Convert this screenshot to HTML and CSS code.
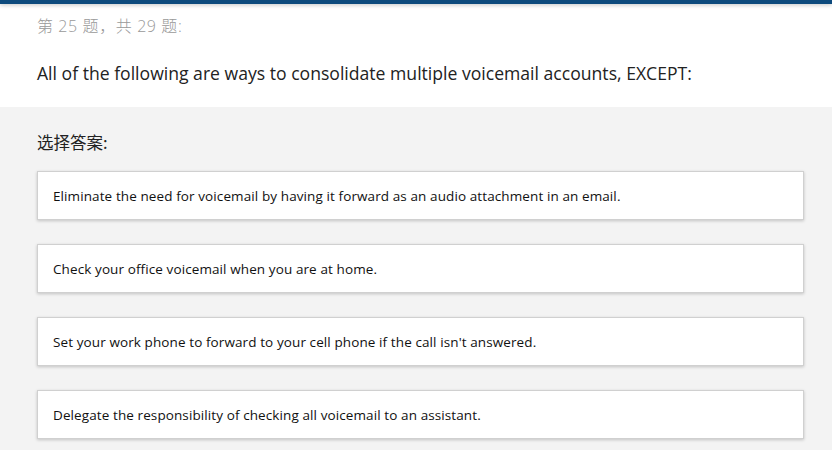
FILE: index.html
```html
<!DOCTYPE html>
<html lang="zh">
<head>
<meta charset="utf-8">
<link rel="stylesheet" href="styles.css">
</head>
<body>
<div class="topbar"></div>
<header class="head">
  <div class="counter">第 25 题，共 29 题:</div>
  <div class="question">All of the following are ways to consolidate multiple voicemail accounts, EXCEPT:</div>
</header>
<main class="answers">
  <div class="label">选择答案:</div>
  <div class="option">Eliminate the need for voicemail by having it forward as an audio attachment in an email.</div>
  <div class="option">Check your office voicemail when you are at home.</div>
  <div class="option">Set your work phone to forward to your cell phone if the call isn't answered.</div>
  <div class="option">Delegate the responsibility of checking all voicemail to an assistant.</div>
</main>
</body>
</html>
```
FILE: styles.css
```css
html, body { margin: 0; padding: 0; }
body {
  font-family: "Open Sans", "Noto Sans", "Noto Sans CJK SC", sans-serif;
  background: #f3f3f3;
  color: #222;
  height: 450px;
  overflow: hidden;
}
.topbar {
  height: 4px;
  background: #0d4a7d;
  box-shadow: 0 1px 4px rgba(0,0,0,0.25);
  position: relative;
}
.head {
  background: #fff;
  padding: 12px 37px 0;
  height: 91px;
}
.counter {
  font-size: 16px;
  color: #999;
  line-height: 20px;
  font-family: "Open Sans", "Noto Sans CJK SC", sans-serif;
  font-weight: 300;
  letter-spacing: 0.6px;
}
.question {
  margin-top: 25px;
  font-size: 17.6px;
  line-height: 24px;
  color: #222;
}
.answers {
  padding: 24px 28px 0 37px;
}
.label {
  font-size: 16.5px;
  line-height: 22px;
  font-family: "Noto Sans CJK SC", sans-serif;
  color: #222;
  margin-bottom: 18px;
}
.option {
  background: #fff;
  border: 1px solid #d0d0d0;
  box-shadow: 0 1px 3px rgba(0,0,0,0.2);
  height: 47px;
  box-sizing: content-box;
  display: flex;
  align-items: center;
  padding: 0 15px;
  font-size: 13.5px;
  letter-spacing: 0.1px;
  color: #111;
  margin-bottom: 24px;
}
```
